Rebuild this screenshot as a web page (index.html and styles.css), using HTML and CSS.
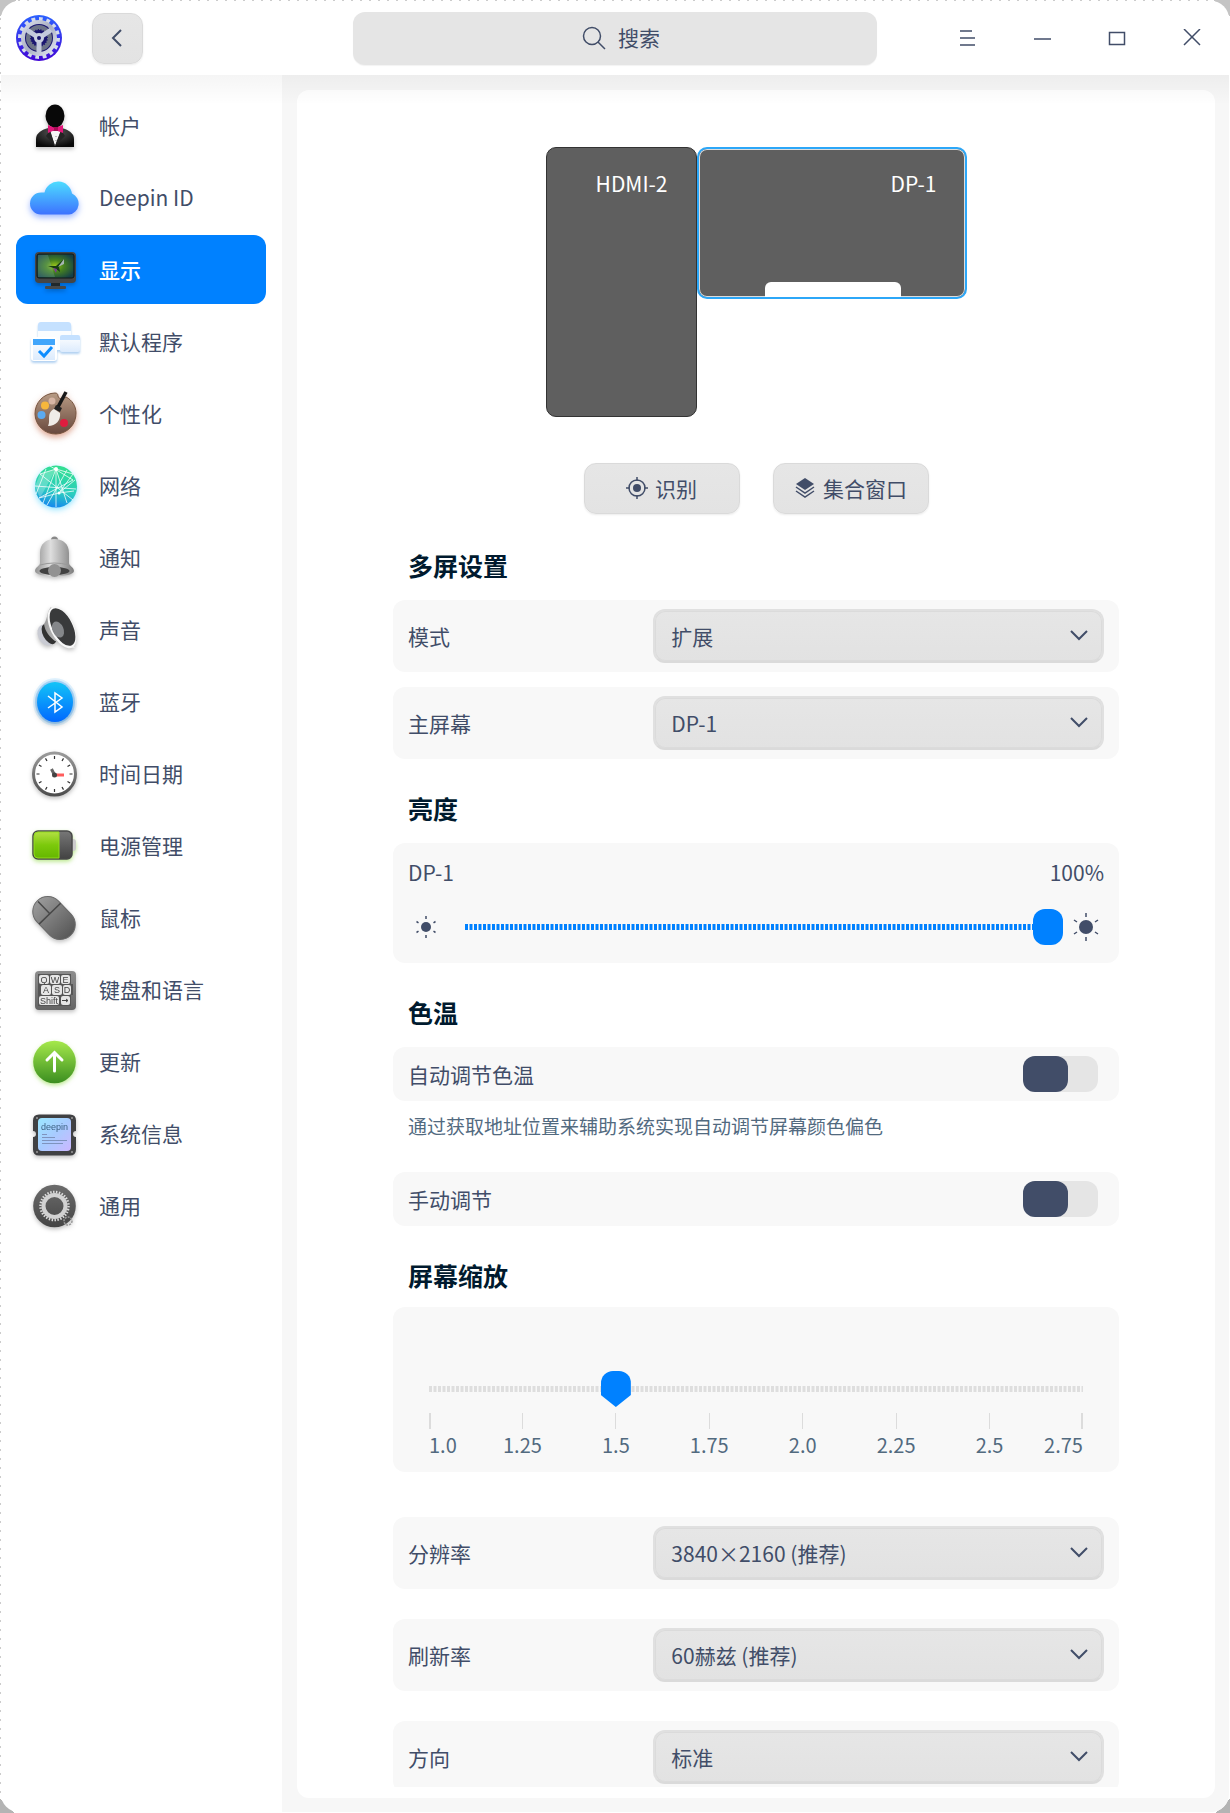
FILE: index.html
```html
<!DOCTYPE html>
<html lang="zh-CN">
<head>
  <meta charset="UTF-8" />
  <meta name="viewport" content="width=device-width, initial-scale=1" />
  <title>控制中心 - 显示</title>
  <link rel="stylesheet" href="styles.css">
</head>
<body>

  <div class="window">
    <!-- Title bar -->
    <header class="titlebar">
      <svg class="logo" viewBox="0 0 46 46" aria-hidden="true">
        <defs>
          <linearGradient id="logoBg" x1="0" y1="0" x2="0" y2="1"><stop offset="0" stop-color="#2c62ff"/><stop offset="1" stop-color="#4206d6"/></linearGradient>
          <linearGradient id="silver" x1="0" y1="0" x2="1" y2="1"><stop offset="0" stop-color="#e3e7ef"/><stop offset=".5" stop-color="#a9afc2"/><stop offset="1" stop-color="#eceff8"/></linearGradient>
        </defs>
        <circle cx="23" cy="23" r="23" fill="url(#logoBg)"/>
        <circle cx="23" cy="23" r="19" fill="none" stroke="#d5dbec" stroke-width="4" pathLength="32" stroke-dasharray="1 1"/>
        <circle cx="23" cy="23" r="18" fill="url(#silver)"/>
        <circle cx="23" cy="23" r="14" fill="#1b1670"/>
        <circle cx="23" cy="23" r="11" fill="none" stroke="#6d7487" stroke-width="4"/>
        <circle cx="23" cy="23" r="9" fill="none" stroke="#6d7487" stroke-width="2" pathLength="40" stroke-dasharray="1 1"/>
        <path d="M23 23v14M23 23L11 15M23 23l12-8" stroke="#c3c9dc" stroke-width="5"/>
        <circle cx="23" cy="23" r="5" fill="#c9cfe0"/>
        <circle cx="23" cy="23" r="2" fill="#1b1670"/>
      </svg>
      <button class="btn back-btn" type="button" aria-label="返回">
        <svg width="18" height="18" viewBox="0 0 18 18"><path d="M12 1L4 9l8 8" fill="none" stroke="currentColor" stroke-width="2"/></svg>
      </button>
      <label class="search">
        <svg width="24" height="24" viewBox="0 0 24 24"><circle cx="10" cy="10" r="8.500" fill="none" stroke="currentColor" stroke-width="1.500"/><path d="M16 16l7 7" stroke="currentColor" stroke-width="1.500"/></svg>
        <input type="text" placeholder="搜索" aria-label="搜索">
      </label>
      <div class="window-controls">
        <button type="button" aria-label="菜单"><svg width="18" height="18" viewBox="0 0 18 18"><path d="M2 2h12M2 9h15M2 16h15" stroke="currentColor" stroke-width="1.500"/></svg></button>
        <button type="button" aria-label="最小化"><svg width="18" height="18" viewBox="0 0 18 18"><path d="M1 10h17" stroke="currentColor" stroke-width="1.500"/></svg></button>
        <button type="button" aria-label="最大化"><svg width="18" height="18" viewBox="0 0 18 18"><path d="M1.500 3.500h15v12h-15z" fill="none" stroke="currentColor" stroke-width="1.500"/></svg></button>
        <button type="button" aria-label="关闭"><svg width="18" height="18" viewBox="0 0 18 18"><path d="M1 0l16 16M17 0L1 16" stroke="currentColor" stroke-width="1.500"/></svg></button>
      </div>
    </header>

    <div class="main">
      <!-- Sidebar -->
      <nav class="sidebar">
        <a href="#" class="nav-item">
          <svg class="icon" viewBox="0 0 50 50">
            <defs><radialGradient id="suit" cx=".5" cy=".3" r=".7"><stop offset="0" stop-color="#5a5a5a"/><stop offset="1" stop-color="#090909"/></radialGradient></defs>
            <path d="M6 46v-8c0-5 4-8 9-10l10-3 10 3c5 2 9 5 9 10v8z" fill="url(#suit)"/>
            <path d="M20 30l5 15 6-15z" fill="#f5f5f5"/>
            <path d="M20 29l5 16-9-10zM31 29l-6 16 10-10z" fill="#242424"/>
            <ellipse cx="25" cy="15" rx="9.500" ry="11.500" fill="#080808"/>
            <path d="M18 24l7 3 8-3v8l-8-3-7 3z" fill="#e3177b"/><path d="M24 26h4v4h-4z" fill="#a80d57"/>
            <path d="M26 35v1M26 39v1" stroke="#888" stroke-width="1"/>
          </svg>
          <span>帐户</span>
        </a>
        <a href="#" class="nav-item">
          <svg class="icon glow-blue" viewBox="0 0 50 50">
            <defs><linearGradient id="cloud" x1="0" y1="0" x2="0" y2="1"><stop offset="0" stop-color="#4ddcff"/><stop offset="1" stop-color="#3d72ff"/></linearGradient></defs>
            <path d="M11 41.500a11 11 0 0 1 0-22h3.500a14 14 0 0 1 27.500 1A11 11 0 0 1 39 41.500z" fill="url(#cloud)"/>
          </svg>
          <span>Deepin ID</span>
        </a>
        <a href="#" class="nav-item active" aria-current="page">
          <svg class="icon" viewBox="0 0 50 50">
            <defs>
              <radialGradient id="screen" cx=".48" cy=".5" r=".6"><stop offset="0" stop-color="#9bc61b"/><stop offset=".4" stop-color="#47831f"/><stop offset="1" stop-color="#143f47"/></radialGradient>
            </defs>
            <path d="M21 37h9v6h-9z" fill="#20282c"/>
            <rect x="15" y="41" width="21" height="3" rx="1" fill="#45494c"/>
            <rect x="5" y="7" width="41" height="31" rx="4" fill="#454545"/>
            <rect x="7" y="9" width="37" height="24" rx="2" fill="url(#screen)" stroke="#101817"/>
            <path d="M8 10h10l7 22H8z" fill="#8ac0b5" opacity=".25"/>
            <path d="M18 21l8 0 8-7-5 8 1 5-4-3z" fill="#173d12"/><path d="M34 14l-6 8 6-3z" fill="#a6b5b3"/><path d="M23 23l4 1-1 4z" fill="#793a96"/>
          </svg>
          <span>显示</span>
        </a>
        <a href="#" class="nav-item">
          <svg class="icon glow-sky" viewBox="0 0 50 50">
            <defs><linearGradient id="pane" x1="0" y1="0" x2="0" y2="1"><stop offset="0" stop-color="#fff"/><stop offset="1" stop-color="#dcebfd"/></linearGradient></defs>
            <rect x="8" y="6" width="33" height="27" rx="2" fill="#fafdff"/><path d="M8 14V8q0-3 3-3h27q3 0 3 3v6z" fill="#c5e1ff"/>
            <rect x="30" y="18" width="20" height="17" rx="2" fill="url(#pane)"/><path d="M30 23v-3q0-2 2-2h16q2 0 2 2v3z" fill="#c5e1ff"/>
            <rect x="1" y="20" width="26" height="24" rx="3" fill="#fff"/><rect x="3" y="22" width="22" height="21" fill="url(#pane)"/><path d="M3 22h22v6H3z" fill="#42a6fb"/>
            <path d="M9 34l5 5 8-9" fill="none" stroke="#0c8dff" stroke-width="3"/>
          </svg>
          <span>默认程序</span>
        </a>
        <a href="#" class="nav-item">
          <svg class="icon glow-brown" viewBox="0 0 50 50">
            <defs><linearGradient id="wood" x1="0" y1="0" x2="0" y2="1"><stop offset="0" stop-color="#b89b84"/><stop offset="1" stop-color="#68483d"/></linearGradient></defs>
            <path d="M25 4c2 0 3 1 3 3 1 4 5 3 8 1 6 3 10 9 10 16a20.500 20.500 0 1 1-21-20z" fill="url(#wood)" stroke="#76543f"/>
            <circle cx="15" cy="16.500" r="4" fill="#f6b73c"/><circle cx="22" cy="12" r="3.500" fill="#d7b5a4"/>
            <circle cx="11.500" cy="26" r="4" fill="#5baaf0"/><circle cx="34" cy="34" r="4" fill="#df1c3f"/>
            <path d="M36 3l-8 15" stroke="#171717" stroke-width="3.500"/><path d="M26 16l6 3-2 4-6-3z" fill="#222"/>
            <path d="M24 20l6 4c1 7-4 13-12 13 3-5-2-13 6-17z" fill="#efece8"/>
          </svg>
          <span>个性化</span>
        </a>
        <a href="#" class="nav-item">
          <svg class="icon glow-cyan" viewBox="0 0 50 50">
            <defs><linearGradient id="globe" x1=".6" y1="0" x2=".4" y2="1"><stop offset="0" stop-color="#32e08f"/><stop offset=".6" stop-color="#2bcdbf"/><stop offset="1" stop-color="#1587ef"/></linearGradient></defs>
            <circle cx="26" cy="25.500" r="21" fill="url(#globe)"/>
            <path d="M10 13l16-5 17 5-14 19L9 37M26 8L13 42M26 8l11 34M5 25l41 3M10 13l33 26M29 32l16-13M20 5l23 14-34 18M26 8v38M16 8L6 33M37 9L17 44M29 32l15-2" fill="none" stroke="#fff" stroke-width="1" opacity=".75"/>
            <path d="M26 8L10 37l-5-12 5-12z" fill="#fff" opacity=".25"/>
            <circle cx="26" cy="8" r="2" fill="#fff"/><circle cx="29" cy="32" r="1.500" fill="#fff"/>
          </svg>
          <span>网络</span>
        </a>
        <a href="#" class="nav-item">
          <svg class="icon" viewBox="0 0 50 50">
            <defs><linearGradient id="bell"><stop offset="0" stop-color="#929292"/><stop offset=".4" stop-color="#dedede"/><stop offset="1" stop-color="#7d7d7d"/></linearGradient></defs>
            <circle cx="24.500" cy="7" r="3.500" fill="#888"/>
            <path d="M10 30V20C10 11 16 6 24.500 6S39 11 39 20v10c0 3 5 4 5 8 0 7-39 7-39 0 0-4 5-5 5-8z" fill="url(#bell)"/>
            <ellipse cx="24.500" cy="38" rx="15" ry="4" fill="#424242"/><circle cx="24.500" cy="37.500" r="6.500" fill="#929292"/>
            <path d="M10 32q14-4 29 0" fill="none" stroke="#999"/>
          </svg>
          <span>通知</span>
        </a>
        <a href="#" class="nav-item">
          <svg class="icon" viewBox="0 0 50 50">
            <defs><linearGradient id="cone"><stop offset="0" stop-color="#9a9a9a"/><stop offset="1" stop-color="#efefef"/></linearGradient></defs>
            <ellipse cx="16" cy="30" rx="8" ry="11" transform="rotate(-25 16 30)" fill="#c9cbd3"/>
            <ellipse cx="19" cy="29" rx="6" ry="11" transform="rotate(-28 19 29)" fill="#333"/>
            <path d="M21 2c-4 4-3 11-7 17 1 8 6 13 11 17 7 1 13 8 20 7z" fill="url(#cone)"/>
            <ellipse cx="32" cy="22.500" rx="11.500" ry="22.500" transform="rotate(-27 32 22.500)" fill="#f8f8f8"/>
            <ellipse cx="32.500" cy="22" rx="10" ry="20.500" transform="rotate(-27 32.500 22)" fill="#393a3b"/>
            <ellipse cx="28" cy="24.500" rx="5.500" ry="8.500" transform="rotate(-24 28 24.500)" fill="#85878a"/>
          </svg>
          <span>声音</span>
        </a>
        <a href="#" class="nav-item">
          <svg class="icon" viewBox="0 0 50 50">
            <defs><linearGradient id="bt" x1="0" y1="0" x2="0" y2="1"><stop offset="0" stop-color="#13c4f7"/><stop offset="1" stop-color="#0068ff"/></linearGradient></defs>
            <ellipse cx="25" cy="25" rx="22" ry="24" fill="#0a9dff" opacity=".12"/><ellipse cx="25" cy="25" rx="20" ry="22" fill="#0a8dff" opacity=".25"/>
            <ellipse cx="25" cy="25" rx="18" ry="20" fill="url(#bt)"/>
            <path d="M18 19l14 11-7 5V16l7 5-14 10" fill="none" stroke="#fff" stroke-width="1.500"/>
          </svg>
          <span>蓝牙</span>
        </a>
        <a href="#" class="nav-item">
          <svg class="icon" viewBox="0 0 50 50">
            <defs><linearGradient id="rim" x1="0" y1="0" x2="0" y2="1"><stop offset="0" stop-color="#9a9a9a"/><stop offset="1" stop-color="#4e4e4e"/></linearGradient></defs>
            <circle cx="24.500" cy="25" r="21" fill="#fff" stroke="url(#rim)" stroke-width="3"/>
            <path d="M24.500 7v3M24.500 40v3M6.500 25h3M39.500 25h3M15.500 9.400l1.500 2.600M32 38l1.500 2.600M33.500 9.400L32 12M17 38l-1.500 2.600M8.900 16l2.600 1.500M37.500 32.500l2.600 1.500M40.100 16l-2.600 1.500M11.500 32.500L8.900 34" stroke="#303030" stroke-width="1.200"/>
            <path d="M24 26h10" stroke="#ff5c5c" stroke-width="3"/><path d="M24.500 26l-3-6" stroke="#666" stroke-width="3"/><circle cx="24.500" cy="26" r="2.500" fill="#444"/>
          </svg>
          <span>时间日期</span>
        </a>
        <a href="#" class="nav-item">
          <svg class="icon glow-green" viewBox="0 0 50 50">
            <defs><linearGradient id="charge" x1="0" y1="0" x2="0" y2="1"><stop offset="0" stop-color="#b3df43"/><stop offset=".5" stop-color="#7cc90b"/><stop offset="1" stop-color="#65b700"/></linearGradient>
            <linearGradient id="shell" x1="0" y1="0" x2="0" y2="1"><stop offset="0" stop-color="#777"/><stop offset="1" stop-color="#424242"/></linearGradient></defs>
            <rect x="40" y="18" width="6" height="12" rx="3" fill="#ccc"/>
            <rect x="3" y="10" width="39" height="28" rx="5" fill="url(#shell)" stroke="#494949" stroke-width="1.500"/>
            <path d="M29 11v26H8q-4 0-4-4V15q0-4 4-4z" fill="url(#charge)" stroke="#92dc1d"/>
          </svg>
          <span>电源管理</span>
        </a>
        <a href="#" class="nav-item">
          <svg class="icon" viewBox="0 0 50 50">
            <defs><linearGradient id="mouse" x1="0" y1="0" x2="0" y2="1"><stop offset="0" stop-color="#9a9a9a"/><stop offset="1" stop-color="#585858"/></linearGradient></defs>
            <g transform="rotate(-44 24 25)">
              <rect x="9" y="1" width="30" height="48" rx="15" fill="url(#mouse)" stroke="#6a6a6a"/>
              <path d="M9 19h30M24 2v17" stroke="#484848" stroke-width="1.500"/>
            </g>
          </svg>
          <span>鼠标</span>
        </a>
        <a href="#" class="nav-item">
          <svg class="icon" viewBox="0 0 50 50">
            <defs><linearGradient id="board" x1="0" y1="0" x2="0" y2="1"><stop offset="0" stop-color="#8d8d8d"/><stop offset="1" stop-color="#646464"/></linearGradient></defs>
            <rect x="5" y="6" width="41" height="39" rx="4" fill="url(#board)"/>
            <path d="M8 9h33v10h2v11h-2v11H8z" fill="#555"/>
            <g fill="#e6e6e6"><rect x="9" y="10" width="10" height="9" rx="2"/><rect x="20" y="10" width="10" height="9" rx="2"/><rect x="31" y="10" width="9" height="9" rx="2"/>
            <rect x="11" y="20" width="10" height="10" rx="2"/><rect x="22" y="20" width="10" height="10" rx="2"/><rect x="33" y="20" width="8" height="10" rx="2"/>
            <rect x="9" y="31" width="20" height="9" rx="2"/><rect x="31" y="31" width="9" height="9" rx="2"/></g>
            <g class="key-text"><text x="14" y="17.500">Q</text><text x="25" y="17.500">W</text><text x="35.500" y="17.500">E</text><text x="16" y="28">A</text><text x="27" y="28">S</text><text x="37" y="28">D</text><text x="19" y="38.500">Shift</text></g>
            <path d="M32 35.500h6l-2-1.500m2 1.500l-2 1.500" fill="none" stroke="#444"/>
          </svg>
          <span>键盘和语言</span>
        </a>
        <a href="#" class="nav-item">
          <svg class="icon glow-green" viewBox="0 0 50 50">
            <defs><linearGradient id="upd" x1="0" y1="0" x2="0" y2="1"><stop offset="0" stop-color="#a6e94b"/><stop offset="1" stop-color="#3b8e20"/></linearGradient></defs>
            <circle cx="24.500" cy="25" r="21.300" fill="url(#upd)"/>
            <path d="M24.500 34V17M17 23l7.500-7.500L32 23" fill="none" stroke="#fff" stroke-width="3" stroke-linecap="round"/>
          </svg>
          <span>更新</span>
        </a>
        <a href="#" class="nav-item">
          <svg class="icon" viewBox="0 0 50 50">
            <defs><linearGradient id="info" x1="0" y1="0" x2="1" y2="1"><stop offset="0" stop-color="#9be7ff"/><stop offset=".5" stop-color="#a8cbff"/><stop offset="1" stop-color="#ccb8ff"/></linearGradient></defs>
            <path d="M9 5.500h31q6 0 6 6V22a3 3 0 0 0 0 6v12.500q0 6-6 6H9q-6 0-6-6V28a3 3 0 0 0 0-6V11.500q0-6 6-6z" fill="#404143"/>
            <rect x="8" y="9" width="33" height="33" rx="4" fill="url(#info)"/>
            <g fill="#999"><circle cx="7" cy="9" r="1"/><circle cx="42" cy="9" r="1"/><circle cx="7" cy="43" r="1"/><circle cx="42" cy="43" r="1"/></g>
            <text class="info-text" x="24.500" y="21">deepin</text>
            <path d="M12 25.500h5M12 28.500h13M12 31.500h25M12 34.500h21" stroke="#7f93bd" stroke-width="1"/>
          </svg>
          <span>系统信息</span>
        </a>
        <a href="#" class="nav-item">
          <svg class="icon" viewBox="0 0 50 50">
            <defs><linearGradient id="disc" x1="0" y1="0" x2="0" y2="1"><stop offset="0" stop-color="#6c6c6c"/><stop offset="1" stop-color="#454545"/></linearGradient></defs>
            <circle cx="24.500" cy="25" r="21.300" fill="url(#disc)"/>
            <circle cx="24.500" cy="25" r="14" fill="none" stroke="#ddd" stroke-width="2.500" pathLength="60" stroke-dasharray="1 1"/>
            <circle cx="24.500" cy="25" r="11" fill="none" stroke="#d2d2d2" stroke-width="4"/>
            <circle cx="38" cy="40" r="4" fill="none" stroke="#999" stroke-width="1.500" stroke-dasharray="2 1"/>
          </svg>
          <span>通用</span>
        </a>
      </nav>

      <!-- Display settings -->
      <main class="content">
        <div class="panel">
          <div class="scroll">
            <div class="monitors">
              <div class="monitor portrait">HDMI-2</div>
              <div class="monitor landscape">DP-1</div>
            </div>
            <div class="actions">
              <button class="btn" type="button">
                <svg width="22" height="22" viewBox="0 0 22 22"><circle cx="11" cy="11" r="8" fill="none" stroke="currentColor" stroke-width="1.500"/><circle cx="11" cy="11" r="4" fill="currentColor"/><path d="M11 0v4M11 18v4M0 11h4M18 11h4" stroke="currentColor" stroke-width="1.500"/></svg>
                识别
              </button>
              <button class="btn" type="button">
                <svg width="22" height="22" viewBox="0 0 22 22"><path d="M11 1l9 6-9 6-9-6z" fill="currentColor"/><path d="M2 10l9 6 9-6M2 14l9 6 9-6" fill="none" stroke="currentColor" stroke-width="1.500"/></svg>
                集合窗口
              </button>
            </div>

            <h2>多屏设置</h2>
            <div class="card row">
              <label for="mode">模式</label>
              <select id="mode"><option>扩展</option><option>复制</option></select>
            </div>
            <div class="card row near">
              <label for="primary">主屏幕</label>
              <select id="primary"><option>DP-1</option><option>HDMI-2</option></select>
            </div>

            <h2>亮度</h2>
            <div class="card brightness">
              <div class="brightness-head">
                <label for="brightness">DP-1</label>
                <output for="brightness">100%</output>
              </div>
              <div class="brightness-slider">
                <svg width="28" height="28" viewBox="0 0 28 28"><circle cx="14" cy="14" r="5" fill="currentColor"/><path d="M14 3v3M14 22v3M4.500 8.500l2 1.300M21.500 18.200l2 1.300M23.500 8.500l-2 1.300M6.500 18.200l-2 1.300" stroke="currentColor" stroke-width="1.500"/></svg>
                <input id="brightness" type="range" min="0" max="100" value="100">
                <svg width="28" height="28" viewBox="0 0 28 28"><circle cx="14" cy="14" r="7" fill="currentColor"/><path d="M14 0v4M14 24v4M2 7l3 2M23 19l3 2M26 7l-3 2M5 19l-3 2" stroke="currentColor" stroke-width="1.500"/></svg>
              </div>
            </div>

            <h2>色温</h2>
            <div class="card toggle-row">
              <label for="auto-temp">自动调节色温</label>
              <input id="auto-temp" class="switch" type="checkbox">
            </div>
            <p class="hint">通过获取地址位置来辅助系统实现自动调节屏幕颜色偏色</p>
            <div class="card toggle-row">
              <label for="manual-temp">手动调节</label>
              <input id="manual-temp" class="switch" type="checkbox">
            </div>

            <h2>屏幕缩放</h2>
            <div class="card scaling">
              <input class="scale-slider" type="range" min="1" max="2.75" step="0.25" value="1.5" aria-label="屏幕缩放">
              <ul class="ticks">
                <li>1.0</li>
                <li>1.25</li>
                <li>1.5</li>
                <li>1.75</li>
                <li>2.0</li>
                <li>2.25</li>
                <li>2.5</li>
                <li>2.75</li>
              </ul>
            </div>

            <div class="card row after-scale">
              <label for="resolution">分辨率</label>
              <select id="resolution"><option>3840×2160 (推荐)</option><option>2560×1440</option><option>1920×1080</option></select>
            </div>
            <div class="card row far">
              <label for="refresh">刷新率</label>
              <select id="refresh"><option>60赫兹 (推荐)</option><option>30赫兹</option></select>
            </div>
            <div class="card row far">
              <label for="rotation">方向</label>
              <select id="rotation"><option>标准</option><option>90度</option><option>180度</option><option>270度</option></select>
            </div>
          </div>
        </div>
      </main>
    </div>
  </div>

</body>
</html>
```

FILE: styles.css
```css
* {
  box-sizing: border-box;
}

html {
  background-color: #fff;
}

body {
  margin: 0;
  height: 100vh;
  padding: 1px 1px 1px 1px;
  font-family: "Noto Sans CJK SC", "Noto Sans", sans-serif;
  font-size: 21px;
  line-height: 30px;
  color: #414d68;
  background:
    linear-gradient(135deg, #c4c4c4 0 12px, transparent 12px) no-repeat,
    linear-gradient(225deg, #c4c4c4 0 12px, transparent 12px) no-repeat,
    linear-gradient(45deg, #b4b4b4 0 10px, transparent 10px) no-repeat,
    linear-gradient(315deg, #b4b4b4 0 10px, transparent 10px) no-repeat,
    repeating-linear-gradient(90deg, #ccc 0 2px, #fff 2px 9px) top / 100% 1px no-repeat,
    repeating-linear-gradient(#ccc 0 2px, #fff 2px 9px) left / 1px 100% no-repeat,
    #fff;
}

button,
input,
select {
  font: inherit;
  color: inherit;
}

.window {
  display: flex;
  flex-direction: column;
  height: 100%;
  overflow: hidden;
  border-radius: 18px;
  background: #fff;
}

/* Title bar */
.titlebar {
  display: flex;
  align-items: center;
  flex-shrink: 0;
  height: 74px;
  padding-left: 15px;
}

.logo {
  width: 46px;
  height: 46px;
}

.btn {
  display: flex;
  align-items: center;
  justify-content: center;
  gap: 7px;
  height: 51px;
  padding: 0 0 2px;
  border: 1px solid #dadada;
  border-radius: 12px;
  background: linear-gradient(#e6e6e6, #e3e3e3);
  box-shadow: 0 1px 2px rgba(0, 0, 0, 0.08);
}

.back-btn {
  width: 51px;
  margin-left: 30px;
  padding: 0;
}

.search {
  display: flex;
  flex: 1;
  align-items: center;
  justify-content: center;
  gap: 12px;
  height: 53px;
  margin-left: 210px;
  padding-left: 12px;
  border-radius: 12px;
  background: #e5e5e5;
  box-shadow: 0 1px 1px rgba(0, 0, 0, 0.05);
}

.search input {
  width: 42px;
  padding: 0 0 2px;
  border: none;
  outline: none;
  background: none;
}

.search input::placeholder {
  color: #414d68;
  opacity: 1;
}

.window-controls {
  display: flex;
  margin-left: 52px;
}

.window-controls button {
  display: flex;
  align-items: center;
  justify-content: center;
  width: 75px;
  height: 74px;
  padding: 0;
  border: none;
  background: none;
}

/* Body below the title bar, with the shade that falls from it */
.main {
  position: relative;
  display: flex;
  flex: 1;
  min-height: 0;
}

.main::before {
  content: "";
  position: absolute;
  inset: 0 0 auto;
  z-index: 1;
  height: 28px;
  background: linear-gradient(rgba(0, 0, 0, 0.04), rgba(0, 0, 0, 0.005));
  pointer-events: none;
}

.sidebar {
  display: flex;
  flex-direction: column;
  flex-shrink: 0;
  gap: 3px;
  width: 281px;
  padding: 16px 16px 0 15px;
}

.nav-item {
  display: flex;
  align-items: center;
  gap: 19px;
  height: 69px;
  padding-left: 14px;
  border-radius: 12px;
  color: inherit;
  text-decoration: none;
}

.nav-item span {
  padding-bottom: 2px;
}

.nav-item.active {
  color: #fff;
  font-weight: 500;
  background: #0081ff;
}

.icon {
  width: 50px;
  height: 50px;
  overflow: visible;
  filter: drop-shadow(0 2px 2px rgba(0, 0, 0, 0.25));
}

.glow-blue {
  filter: drop-shadow(0 3px 3px rgba(61, 114, 255, 0.5));
}

.glow-sky {
  filter: drop-shadow(0 2px 1px rgba(60, 140, 220, 0.4));
}

.glow-brown {
  filter: drop-shadow(0 3px 3px rgba(190, 80, 40, 0.5));
}

.glow-cyan {
  filter: drop-shadow(0 2px 3px rgba(30, 200, 255, 0.5));
}

.glow-green {
  filter: drop-shadow(0 2px 2px rgba(120, 210, 30, 0.5));
}

.key-text {
  font-family: "Liberation Sans", sans-serif;
  font-size: 9px;
  text-anchor: middle;
  fill: #444;
}

.info-text {
  font-family: "Liberation Sans", sans-serif;
  font-size: 9px;
  text-anchor: middle;
  fill: #3d6384;
}

/* Content */
.content {
  flex: 1;
  min-width: 0;
  padding: 15px 14px 14px 15px;
  background: #f7f7f7;
}

.panel {
  height: 100%;
  padding-bottom: 11px;
  border-radius: 12px;
  background: #fff;
}

.scroll {
  height: 100%;
  padding: 57px 96px 12px;
  overflow-y: auto;
  scrollbar-width: none;
}

.monitors {
  display: flex;
  align-items: flex-start;
  justify-content: center;
}

.monitor {
  padding: 20px 28px;
  border: 1px solid #333;
  border-radius: 10px;
  color: #fff;
  text-align: right;
  background: #5f5f5f;
}

.portrait {
  width: 151px;
  height: 270px;
}

.landscape {
  position: relative;
  width: 270px;
  height: 152px;
  border: 2px solid #2ca7f8;
  box-shadow: inset 0 0 0 1px #ddd;
  padding-top: 19px;
}

.landscape::after {
  content: "";
  position: absolute;
  bottom: 0;
  left: 25%;
  width: 51%;
  height: 15px;
  border-radius: 6px 6px 0 0;
  background: #fff;
}

.actions {
  display: flex;
  justify-content: center;
  gap: 33px;
  margin: 46px 0 33px;
}

.actions .btn {
  width: 156px;
}

h2 {
  margin: 31px 15px 17px;
  font-size: 25px;
  font-weight: 700;
  line-height: 36px;
  color: #001a2e;
}

.card {
  border-radius: 12px;
  background: #f8f8f8;
}

.row {
  display: grid;
  grid-template-columns: 245fr 450fr;
  align-items: center;
  padding: 9px 15px;
}

.near {
  margin-top: 15px;
}

.far {
  margin-top: 30px;
}

.after-scale {
  margin-top: 45px;
}

select {
  appearance: none;
  width: 100%;
  height: 54px;
  padding: 0 50px 0 16px;
  border: 2px solid #e0e0e0;
  border-bottom-color: #dadada;
  border-radius: 12px;
  background:
    url("data:image/svg+xml,%3Csvg xmlns='http://www.w3.org/2000/svg' width='18' height='12'%3E%3Cpath d='M1 1l8 8 8-8' fill='none' stroke='%23414d68' stroke-width='2'/%3E%3C/svg%3E") right 14px center no-repeat,
    linear-gradient(#e6e6e6, #e2e2e2);
  box-shadow: inset 0 0 0 1px #dbdbdb;
}

/* Brightness */
.brightness {
  padding: 14px 15px 18px;
}

.brightness-head {
  display: flex;
  justify-content: space-between;
}

.brightness-slider {
  display: flex;
  align-items: center;
  margin-top: 22px;
  padding: 0 4px;
}

.brightness-slider input {
  flex: 1;
  margin: 0 9px 0 25px;
}

input[type="range"] {
  appearance: none;
  display: block;
  min-width: 0;
  height: 36px;
  background: repeating-linear-gradient(90deg, #0081ff 0 3px, transparent 3px 4px, #7bbdfc 4px 5px, #0081ff 5px 7px, #7bbdfc 7px 8px, transparent 8px 9px) center / 100% 6px no-repeat;
}

input[type="range"]::-webkit-slider-thumb {
  appearance: none;
  width: 30px;
  height: 36px;
  border-radius: 12px;
  background: #0081ff;
}

/* Colour temperature */
.toggle-row {
  display: flex;
  align-items: center;
  justify-content: space-between;
  height: 54px;
  padding: 0 21px 0 15px;
}

.switch {
  appearance: none;
  width: 75px;
  height: 36px;
  margin: 0;
  border-radius: 12px;
  background: #e5e5e5;
}

.switch::before {
  content: "";
  display: block;
  width: 45px;
  height: 36px;
  border-radius: 12px;
  background: #414d68;
}

.switch:checked::before {
  margin-left: auto;
  background: #0081ff;
}

.hint {
  margin: 11px 15px 32px;
  font-size: 19px;
  line-height: 28px;
  color: #526a7f;
}

/* Screen scaling */
.scaling {
  margin-top: -3px;
  padding: 64px 21px 12px;
}

input.scale-slider {
  width: 100%;
  margin: 0;
  background: repeating-linear-gradient(90deg, #dedede 0 3px, transparent 3px 4px, #ebebeb 4px 5px, #dedede 5px 7px, #ebebeb 7px 8px, transparent 8px 9px) center / calc(100% - 30px) 6px no-repeat;
}

input.scale-slider::-webkit-slider-thumb {
  border-radius: 12px 12px 0 0;
  clip-path: polygon(0 0, 100% 0, 100% 67%, 50% 100%, 0 67%);
}

.ticks {
  display: flex;
  justify-content: space-between;
  margin: 6px 15px 0;
  padding: 0;
  list-style: none;
  font-size: 20px;
  line-height: 31px;
  color: #526a7f;
}

.ticks li {
  display: flex;
  flex-direction: column;
  align-items: center;
  width: 0;
}

.ticks li::before {
  content: "";
  width: 1px;
  height: 16px;
  background: #dcdcdc;
}

.ticks li:first-child {
  align-items: flex-start;
}

.ticks li:last-child {
  align-items: flex-end;
}

.ticks li:first-child::before,
.ticks li:last-child::before {
  width: 2px;
}
```
